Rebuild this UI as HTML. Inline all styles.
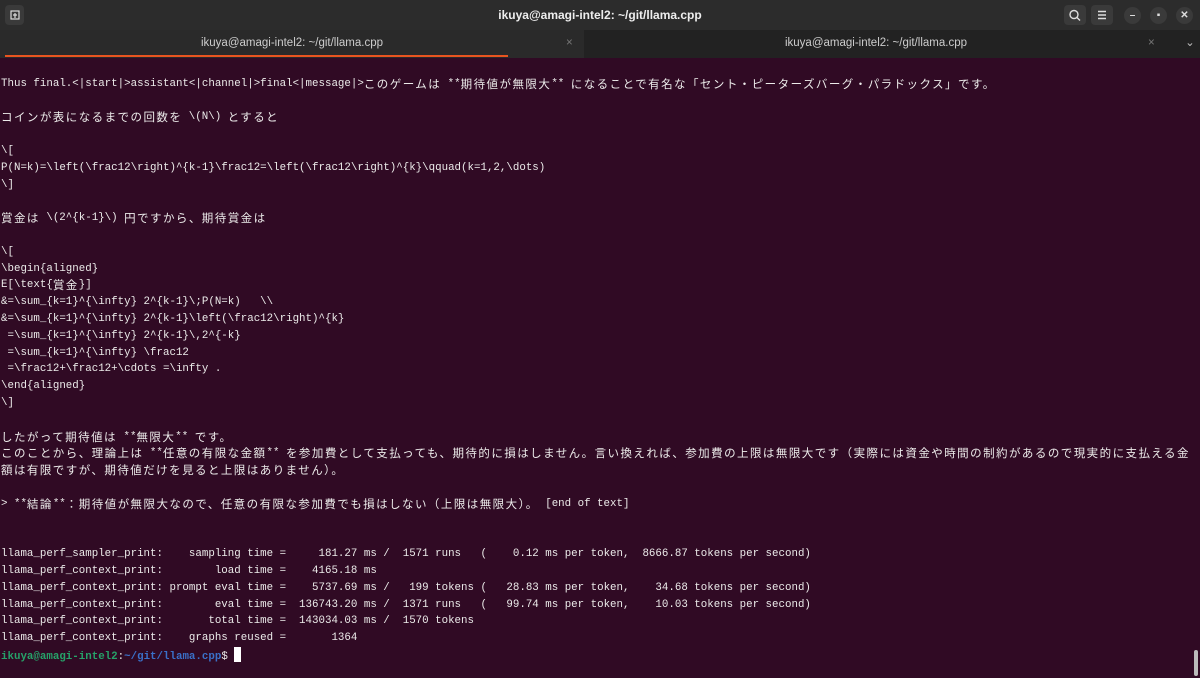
<!DOCTYPE html>
<html><head><meta charset="utf-8"><style>
*{margin:0;padding:0;box-sizing:border-box}
body{width:1200px;height:678px;overflow:hidden;background:#300a24;font-family:"Liberation Sans",sans-serif;position:relative}
#title{position:absolute;left:0;top:0;width:1200px;height:30px;background:#2c2c2c;color:#eee;font-weight:bold;font-size:12px;text-align:center;line-height:30px}
#tabs{position:absolute;left:0;top:30px;width:1200px;height:28px;background:#222;color:#ccc;font-size:11.5px}
.tab{position:absolute;top:0;height:28px;line-height:27px;text-align:center}
.btn{position:absolute;top:5px;width:22px;height:20px;border-radius:4px;background:#3a3a3a}
.circ{position:absolute;top:7px;width:17px;height:17px;border-radius:50%;background:#3a3a3a;color:#ddd;font-size:10px;text-align:center;line-height:17px}
#term{position:absolute;left:1px;top:59px;font-family:"Liberation Mono","DejaVu Sans Mono",monospace;font-size:10.8px;line-height:16.8px;color:#ecebea;white-space:pre}
.j{font-family:"Noto Sans CJK JP",sans-serif;font-size:11.5px;letter-spacing:1.45px;display:inline-block;height:16.8px;line-height:16.8px;vertical-align:top;overflow:visible}
.g{color:#26a269;font-weight:bold}.b{color:#3a70c8;font-weight:bold}
</style></head><body>
<div id="title">ikuya@amagi-intel2: ~/git/llama.cpp
<div class="btn" style="left:5px;top:5px;width:19px"><svg width="19" height="20"><rect x="6" y="6" width="8" height="8" fill="none" stroke="#ddd" stroke-width="1.2"/><path d="M10 8v5M8 10h4" stroke="#ddd" stroke-width="1.2"/></svg></div>
<div class="btn" style="left:1064px"><svg width="22" height="20"><circle cx="10" cy="9.5" r="4" fill="none" stroke="#ddd" stroke-width="1.4"/><path d="M13 12.5l3 3" stroke="#ddd" stroke-width="1.4"/></svg></div>
<div class="btn" style="left:1091px"><svg width="22" height="20"><path d="M7 6.5h8M7 10h8M7 13.5h8" stroke="#ddd" stroke-width="1.4"/></svg></div>
<div class="circ" style="left:1124px">–</div>
<div class="circ" style="left:1150px">▪</div>
<div class="circ" style="left:1176px">✕</div>
</div>
<div id="tabs">
<div class="tab" style="left:0;width:584px;background:#2a2a2a">ikuya@amagi-intel2: ~/git/llama.cpp<span style="position:absolute;left:566px;color:#777">×</span><div style="position:absolute;left:5px;top:25px;width:503px;height:2px;background:#e95420"></div></div>
<div class="tab" style="left:584px;width:584px">ikuya@amagi-intel2: ~/git/llama.cpp<span style="position:absolute;left:564px;color:#777">×</span></div>
<div class="tab" style="left:1180px;width:20px;color:#bbb">⌄</div>
</div>
<div id="term">
Thus final.&lt;|start|&gt;assistant&lt;|channel|&gt;final&lt;|message|&gt;<span class="j">このゲームは</span> **<span class="j">期待値が無限大</span>** <span class="j">になることで有名な「セント・ピーターズバーグ・パラドックス」です。</span>

<span class="j">コインが表になるまでの回数を</span> \(N\) <span class="j">とすると</span>

\[
P(N=k)=\left(\frac12\right)^{k-1}\frac12=\left(\frac12\right)^{k}\qquad(k=1,2,\dots)
\]

<span class="j">賞金は</span> \(2^{k-1}\) <span class="j">円ですから、期待賞金は</span>

\[
\begin{aligned}
E[\text{<span class="j">賞金</span>}]
&amp;=\sum_{k=1}^{\infty} 2^{k-1}\;P(N=k)   \\
&amp;=\sum_{k=1}^{\infty} 2^{k-1}\left(\frac12\right)^{k}
 =\sum_{k=1}^{\infty} 2^{k-1}\,2^{-k}
 =\sum_{k=1}^{\infty} \frac12
 =\frac12+\frac12+\cdots =\infty .
\end{aligned}
\]

<span class="j">したがって期待値は</span> **<span class="j">無限大</span>** <span class="j">です。</span>
<span class="j">このことから、理論上は</span> **<span class="j">任意の有限な金額</span>** <span class="j">を参加費として支払っても、期待的に損はしません。言い換えれば、参加費の上限は無限大です（実際には資金や時間の制約があるので現実的に支払える金</span>
<span class="j">額は有限ですが、期待値だけを見ると上限はありません）。</span>

&gt; **<span class="j">結論</span>**<span class="j">：期待値が無限大なので、任意の有限な参加費でも損はしない（上限は無限大）。</span> [end of text]


llama_perf_sampler_print:    sampling time =     181.27 ms /  1571 runs   (    0.12 ms per token,  8666.87 tokens per second)
llama_perf_context_print:        load time =    4165.18 ms
llama_perf_context_print: prompt eval time =    5737.69 ms /   199 tokens (   28.83 ms per token,    34.68 tokens per second)
llama_perf_context_print:        eval time =  136743.20 ms /  1371 runs   (   99.74 ms per token,    10.03 tokens per second)
llama_perf_context_print:       total time =  143034.03 ms /  1570 tokens
llama_perf_context_print:    graphs reused =       1364
<span class="g">ikuya@amagi-intel2</span>:<span class="b">~/git/llama.cpp</span>$ <span style="background:#fff;display:inline-block;width:7px;height:15px;vertical-align:-3px"></span></div>
<div style="position:absolute;left:1194px;top:650px;width:4px;height:26px;border-radius:2px;background:#bbb"></div>
</body></html>
